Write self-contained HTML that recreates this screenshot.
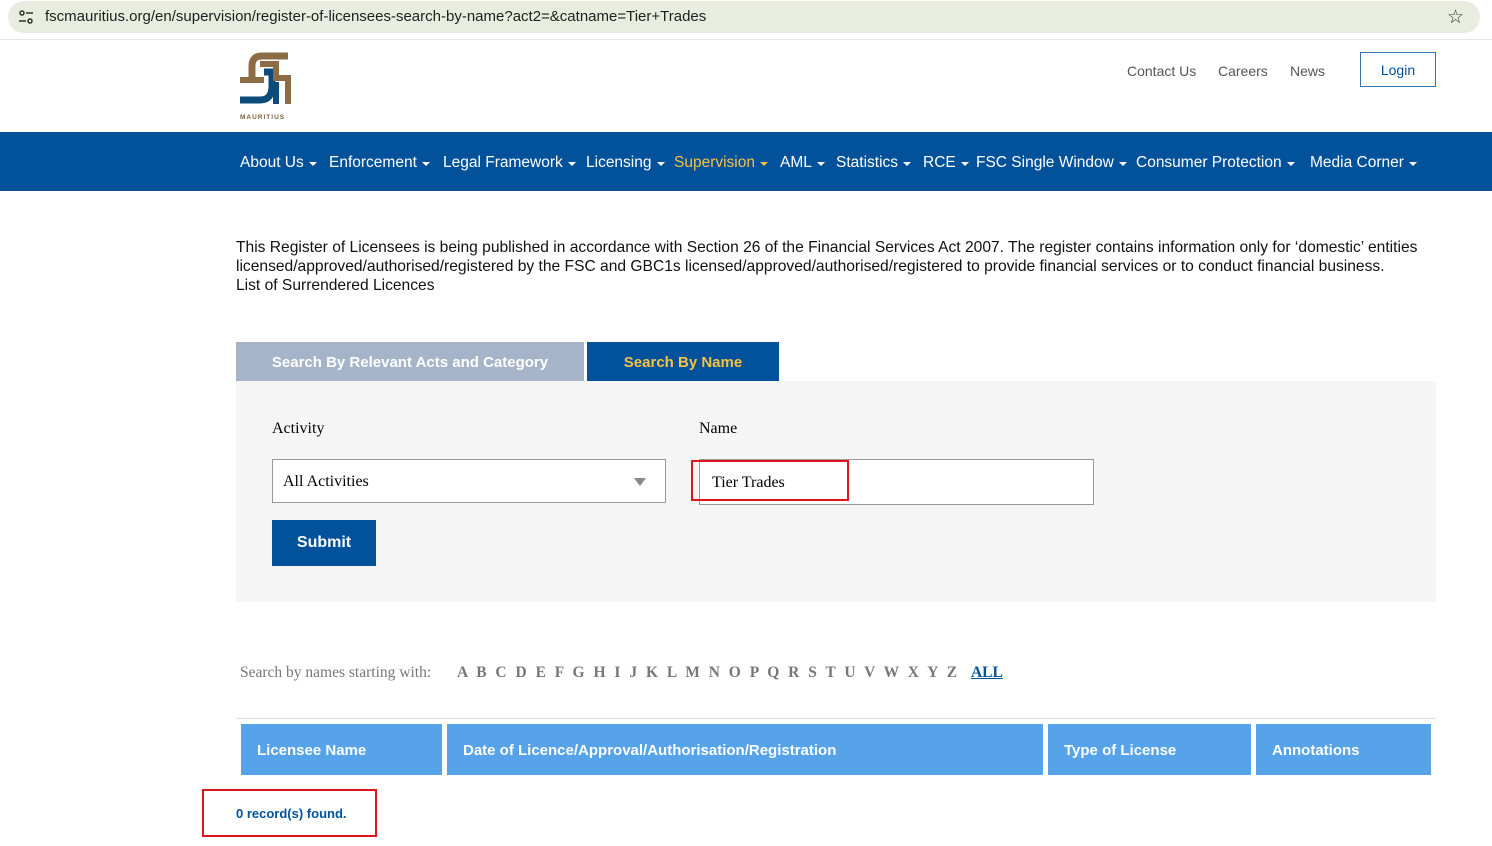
<!DOCTYPE html>
<html><head><meta charset="utf-8"><style>
*{box-sizing:border-box;margin:0;padding:0}
body{width:1492px;height:846px;overflow:hidden;background:#fff;font-family:"Liberation Sans",sans-serif;position:relative}
.a{position:absolute}
.bar{left:0;top:0;width:1492px;height:40px;background:#fff;border-bottom:1px solid #e6e6e6}
.url{left:8px;top:1px;width:1472px;height:32px;background:#e8ede0;border-radius:16px;font-size:15px;color:#1f1f1f;line-height:32px;padding-left:37px}
.nav{left:0;top:132px;width:1492px;height:59px;background:#01519b}
.nav span{position:absolute;top:22px;color:#fff;font-size:15.5px;white-space:nowrap}
.nav span:after{content:"";display:inline-block;margin-left:5px;border-left:4px solid transparent;border-right:4px solid transparent;border-top:4px solid currentColor;vertical-align:1px}
.top{top:63px;font-size:14px;color:#555}
.serif{font-family:"Liberation Serif",serif}
.th{top:724px;height:51px;background:#56a3ea;color:#fff;font-weight:bold;font-size:15px;line-height:53px;padding-left:16px}
</style></head><body>
<div class="a bar"></div>
<div class="a url">fscmauritius.org/en/supervision/register-of-licensees-search-by-name?act2=&amp;catname=Tier+Trades</div>
<svg class="a" style="left:18px;top:10px" width="16" height="14"><circle cx="4" cy="3" r="2" fill="none" stroke="#333" stroke-width="1.5"/><line x1="8" y1="3" x2="15" y2="3" stroke="#333" stroke-width="1.5"/><line x1="1" y1="11" x2="8" y2="11" stroke="#333" stroke-width="1.5"/><circle cx="12" cy="11" r="2" fill="none" stroke="#333" stroke-width="1.5"/></svg>
<div class="a" style="left:1447px;top:6px;font-size:19px;color:#333">☆</div>
<svg class="a" style="left:240px;top:52px" width="52" height="60"><path d="M12 30 V14 Q12 4 22 4 H48" fill="none" stroke="#8c6c45" stroke-width="7"/><path d="M0 28 H24" stroke="#8c6c45" stroke-width="6"/><path d="M24 22 H32 V36 Q32 50 20 50 H0" fill="none" stroke="#0d4b7a" stroke-width="7" transform="translate(0,-2)"/><path d="M20 12 H36 V26 H48 V52" fill="none" stroke="#8c6c45" stroke-width="6"/><path d="M36 30 V52" stroke="#0d4b7a" stroke-width="6"/></svg>
<div class="a" style="left:240px;top:114px;font-size:6.5px;color:#7a6040;font-weight:bold;letter-spacing:1px">MAURITIUS</div>
<div class="a top" style="left:1127px">Contact Us</div>
<div class="a top" style="left:1218px">Careers</div>
<div class="a top" style="left:1290px">News</div>
<div class="a" style="left:1360px;top:52px;width:76px;height:35px;border:1px solid #3574b5;color:#01519b;font-size:14px;text-align:center;line-height:35px">Login</div>
<div class="a nav">
<span style="left:240px">About Us</span><span style="left:329px">Enforcement</span><span style="left:443px">Legal Framework</span><span style="left:586px">Licensing</span><span style="left:674px;color:#f6c244">Supervision</span><span style="left:780px">AML</span><span style="left:836px">Statistics</span><span style="left:923px">RCE</span><span style="left:976px">FSC Single Window</span><span style="left:1136px">Consumer Protection</span><span style="left:1310px">Media Corner</span>
</div>
<div class="a" style="left:236px;top:238px;width:1220px;font-size:15.6px;line-height:19px;color:#111">This Register of Licensees is being published in accordance with Section 26 of the Financial Services Act 2007. The register contains information only for ‘domestic’ entities licensed/approved/authorised/registered by the FSC and GBC1s licensed/approved/authorised/registered to provide financial services or to conduct financial business.<br>List of Surrendered Licences</div>
<div class="a" style="left:236px;top:342px;width:348px;height:39px;background:#a5b4c8;color:#fff;font-weight:bold;font-size:15px;text-align:center;line-height:41px">Search By Relevant Acts and Category</div>
<div class="a" style="left:587px;top:342px;width:192px;height:39px;background:#01519b;color:#f6c244;font-weight:bold;font-size:15px;text-align:center;line-height:41px">Search By Name</div>
<div class="a" style="left:236px;top:381px;width:1200px;height:221px;background:#f5f5f5"></div>
<div class="a serif" style="left:272px;top:420px;font-size:16px">Activity</div>
<div class="a serif" style="left:699px;top:420px;font-size:16px">Name</div>
<div class="a serif" style="left:272px;top:459px;width:394px;height:44px;background:#fff;border:1px solid #999;font-size:16px;line-height:44px;padding-left:10px">All Activities</div>
<div class="a" style="left:634px;top:478px;border-left:6px solid transparent;border-right:6px solid transparent;border-top:8px solid #888"></div>
<div class="a serif" style="left:699px;top:459px;width:395px;height:46px;background:#fff;border:1px solid #999"></div>
<div class="a serif" style="left:691px;top:460px;width:158px;height:41px;border:2px solid #e0141d;font-size:16px;line-height:42px;padding-left:19px">Tier Trades</div>
<div class="a" style="left:272px;top:520px;width:104px;height:46px;background:#01519b;color:#fff;font-weight:bold;font-size:16px;text-align:center;line-height:46px">Submit</div>
<div class="a serif" style="left:240px;top:664px;font-size:15.5px;color:#777;white-space:nowrap">Search by names starting with: <b style="color:#777;word-spacing:5px;margin-left:22px">A B C D E F G H I J K L M N O P Q R S T U V W X Y Z</b> <b style="color:#01519b;text-decoration:underline;margin-left:10px">ALL</b></div>
<div class="a" style="left:236px;top:718px;width:1200px;height:1px;background:#ddd"></div>
<div class="a th" style="left:241px;width:201px">Licensee Name</div>
<div class="a th" style="left:447px;width:596px">Date of Licence/Approval/Authorisation/Registration</div>
<div class="a th" style="left:1048px;width:203px">Type of License</div>
<div class="a th" style="left:1256px;width:175px">Annotations</div>
<div class="a" style="left:202px;top:789px;width:175px;height:48px;border:2px solid #e0141d;color:#01519b;font-size:13px;font-weight:bold;line-height:46px;padding-left:32px">0 record(s) found.</div>
</body></html>
